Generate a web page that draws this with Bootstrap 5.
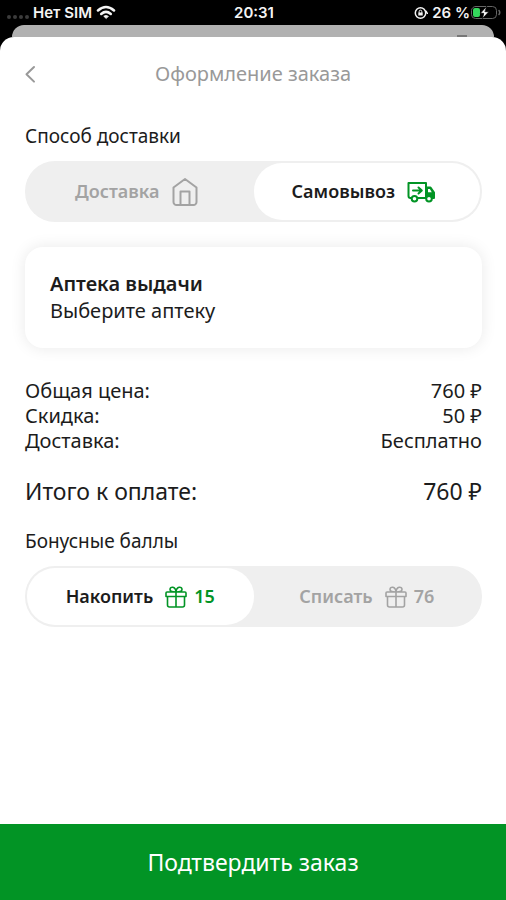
<!DOCTYPE html>
<html lang="ru">
<head>
<meta charset="utf-8">
<meta name="viewport" content="width=device-width, initial-scale=1">
<title>Оформление заказа</title>
<link href="https://cdn.jsdelivr.net/npm/bootstrap@5.3.0/dist/css/bootstrap.min.css" rel="stylesheet">
<style>
  :root { --brand: #029425; --ink: #1c1c1c; --muted: #a3a3a3; --track: #efefef; }
  body { font-family: "Noto Sans", sans-serif; color: var(--ink); background: #000; font-size: 20px; line-height: 25px; }
  .statusbar { height: 25px; padding: 0 5px 0 7px; font: 600 15px/25px Inter, sans-serif; color: #f4f4f4; }
  .statusbar > div { flex: 1 1 0; white-space: nowrap; }
  .signal { gap: 2px; padding-top: 8px; }
  .signal i { width: 4px; height: 4px; border-radius: 50%; background: #3c3c3c; }
  .backdrop-sheet { height: 12px; margin: 0 12px; background: #b1b1b1; border-radius: 12px 12px 0 0; padding-right: 27px; }
  .backdrop-sheet span { width: 10px; height: 2px; background: #777; }
  .sheet { border-radius: 14px 14px 0 0; }
  .sheet-header { height: 74px; padding: 0 24px; }
  .sheet-header h1 { font-size: 20px; line-height: 26px; color: #999; }
  .side { width: 32px; color: #999; }
  .sheet-body { padding: 13px 24px 24px 25px; }
  .section-title { font-size: 19px; line-height: 24px; }
  .toggle { background: var(--track); border-radius: 30px; padding: 2px; margin-top: 13px; }
  .toggle .btn { --bs-btn-color: var(--muted); --bs-btn-active-color: var(--ink); --bs-btn-active-bg: #fff;
    --bs-btn-border-width: 0; --bs-btn-border-radius: 28px; --bs-btn-font-weight: 600; --bs-btn-font-size: 18px;
    height: 57px; flex: 1 1 0; gap: 12px; }
  .toggle-method .btn { padding-right: 18px; }
  .toggle .points { gap: 7px; }
  .toggle .btn-check:checked + .btn .accent { color: var(--brand); }
  .pickup { border-radius: 18px; padding: 23px 25px 24px; margin: 25px 0 30px; box-shadow: 0 0 16px rgba(0,0,0,.09); line-height: 27px; }
  .pickup strong { font-weight: 600; }
  .total { font-size: 23px; line-height: 30px; margin: 23px 0; }
  .confirm { --bs-btn-color: #fff; --bs-btn-bg: var(--brand); --bs-btn-hover-bg: #018020; --bs-btn-hover-color: #fff;
    --bs-btn-active-bg: #017a1e; --bs-btn-active-color: #fff; height: 76px; font-size: 23px; border: 0; }
  svg { fill: none; stroke: currentColor; stroke-linecap: round; stroke-linejoin: round; flex: none; }
</style>
</head>
<body class="min-vh-100 d-flex flex-column">
<div class="statusbar d-flex align-items-center">
  <div class="d-flex align-items-center">
    <span class="signal d-flex"><i></i><i></i><i></i><i></i></span>
    <span class="ms-1">Нет SIM</span>
    <svg class="ms-1" width="20" height="15" viewBox="0 0 20 15" aria-hidden="true"><g fill="none" stroke-width="2.600"><path d="M2 5.400Q10-1.400 18 5.400" /><path d="M5.200 8.900Q10 4.800 14.800 8.900"/></g><path d="M10 13.400 7.700 11.200Q10 9.400 12.300 11.200Z" fill="currentColor" stroke-width=".6"/></svg>
  </div>
  <time class="text-center">20:31</time>
  <div class="d-flex align-items-center justify-content-end">
    <svg width="14" height="14" viewBox="0 0 14 14" stroke-width="1.5" aria-hidden="true"><circle cx="6.500" cy="7" r="5.200"/><path d="M12 5.200 13.300 7.300"/><rect x="4.300" y="6.500" width="4.400" height="3" fill="currentColor" stroke="none"/><path d="M5.200 6.500V5.500a1.300 1.300 0 0 1 2.600 0v1" stroke-width="1"/></svg>
    <span class="ms-1">26 %</span>
    <svg width="31" height="15" viewBox="0 0 31 15" aria-hidden="true"><g color="#666"><rect x="1.500" y="1.500" width="25" height="12" rx="4"/><path d="M29 5.500q1.500 2 0 4" stroke-width="1.500"/></g><rect x="3" y="3" width="7" height="9" rx="2" fill="#34d75c" color="#34d75c" stroke-width="0"/><path d="M16.500 1.500 10.300 8.300H13.700L12.500 13.500 18.900 6.700H15.300Z" fill="#fff" color="#000" stroke-width=".8"/></svg>
  </div>
</div>
<div class="backdrop-sheet d-flex align-items-end justify-content-end"><span></span></div>

<main class="sheet bg-white flex-grow-1 d-flex flex-column">
  <header class="sheet-header d-flex align-items-center">
    <button type="button" class="btn p-0 border-0 side text-start d-flex" aria-label="Назад">
      <svg width="12" height="20" viewBox="0 0 12 20" stroke-width="2" aria-hidden="true"><path d="M10 3 2.500 10.200 10 17.600"/></svg>
    </button>
    <h1 class="flex-grow-1 text-center fw-normal mb-0">Оформление заказа</h1>
    <div class="side"></div>
  </header>

  <form id="order" class="sheet-body flex-grow-1">
    <h2 class="section-title fw-normal mb-0">Способ доставки</h2>
    <div class="toggle toggle-method d-flex" role="group" aria-label="Способ доставки">
      <input class="btn-check" type="radio" name="method" id="delivery">
      <label class="btn d-flex align-items-center justify-content-center" for="delivery">Доставка
        <svg class="accent" width="28" height="30" viewBox="0 0 28 30" stroke-width="2" aria-hidden="true"><path d="M2.500 10.500 14 2 25.500 10.500V25a3 3 0 0 1-3 3H5.500a3 3 0 0 1-3-3ZM9.500 28V14.500H18.500V28"/></svg>
      </label>
      <input class="btn-check" type="radio" name="method" id="self" checked>
      <label class="btn d-flex align-items-center justify-content-center" for="self">Самовывоз
        <svg class="accent" width="29" height="22" viewBox="0 0 29 22" stroke-width="2" aria-hidden="true"><path d="M4.500 17H3.500a2 2 0 0 1-2-2V2H19V17H10.500M6 9.500H14.500M11.500 6.500 14.800 9.500 11.500 12.500"/><path d="M19 6.500H23.500L27 11.500V17H19Z" fill="currentColor"/><path d="M21 8H22.800L24.800 11.300H21Z" fill="#fff" stroke-width="0"/><circle cx="7.500" cy="17.800" r="2.800" fill="#fff"/><circle cx="22" cy="17.800" r="2.800" fill="#fff"/></svg>
      </label>
    </div>

    <section class="pickup card border-0">
      <strong>Аптека выдачи</strong>
      <span>Выберите аптеку</span>
    </section>

    <dl class="mb-0">
      <div class="d-flex justify-content-between"><dt class="fw-normal">Общая цена:</dt><dd class="mb-0">760 ₽</dd></div>
      <div class="d-flex justify-content-between"><dt class="fw-normal">Скидка:</dt><dd class="mb-0">50 ₽</dd></div>
      <div class="d-flex justify-content-between"><dt class="fw-normal">Доставка:</dt><dd class="mb-0">Бесплатно</dd></div>
      <div class="total d-flex justify-content-between"><dt class="fw-normal">Итого к оплате:</dt><dd class="mb-0">760 ₽</dd></div>
    </dl>

    <h2 class="section-title fw-normal mb-0">Бонусные баллы</h2>
    <div class="toggle d-flex" role="group" aria-label="Бонусные баллы">
      <input class="btn-check" type="radio" name="bonus" id="collect" checked>
      <label class="btn d-flex align-items-center justify-content-center" for="collect">Накопить
        <span class="accent points d-flex align-items-center"><svg width="22" height="22" viewBox="0 0 22 22" stroke-width="1.600" aria-hidden="true"><path d="M2 6H20a1 1 0 0 1 1 1V10.500H1V7a1 1 0 0 1 1-1ZM2.500 10.500V19a2 2 0 0 0 2 2H17.500a2 2 0 0 0 2-2V10.500M11 6V21M11 6C7.500 6 5 5.500 5 3.500 5 .2 10.500.2 11 6 11.500.2 17 .2 17 3.500 17 5.500 14.500 6 11 6"/></svg>15</span>
      </label>
      <input class="btn-check" type="radio" name="bonus" id="spend">
      <label class="btn d-flex align-items-center justify-content-center" for="spend">Списать
        <span class="accent points d-flex align-items-center"><svg width="22" height="22" viewBox="0 0 22 22" stroke-width="1.600" aria-hidden="true"><path d="M2 6H20a1 1 0 0 1 1 1V10.500H1V7a1 1 0 0 1 1-1ZM2.500 10.500V19a2 2 0 0 0 2 2H17.500a2 2 0 0 0 2-2V10.500M11 6V21M11 6C7.500 6 5 5.500 5 3.500 5 .2 10.500.2 11 6 11.500.2 17 .2 17 3.500 17 5.500 14.500 6 11 6"/></svg>76</span>
      </label>
    </div>
  </form>
  <button type="submit" form="order" class="confirm btn w-100 rounded-0">Подтвердить заказ</button>
</main>
<script src="https://cdn.jsdelivr.net/npm/bootstrap@5.3.0/dist/js/bootstrap.bundle.min.js"></script>
</body>
</html>
